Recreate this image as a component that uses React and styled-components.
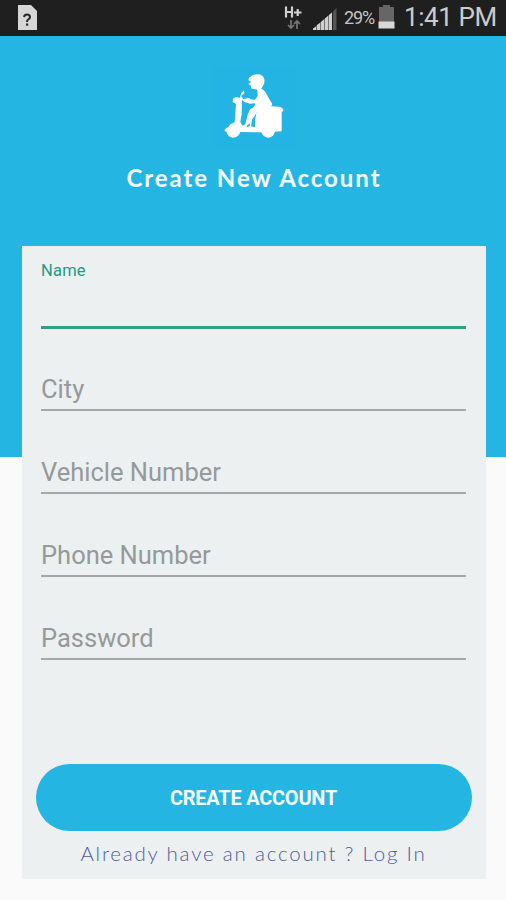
import React from "react";
import styled, { createGlobalStyle } from "styled-components";

const GlobalStyle = createGlobalStyle`
  * { box-sizing: border-box; }
  body { margin: 0; background: #fafafa; font-family: Roboto, sans-serif; }
`;

const Screen = styled.main`
  width: 506px;
  height: 900px;
  overflow: hidden;
  background: #fafafa;
`;

const StatusBar = styled.div`
  display: flex;
  justify-content: space-between;
  height: 36px;
  padding: 0 10px 0 18px;
  background: #1f1f1f;
  color: #cfcfcf;
`;

const StatusGroup = styled.div`
  display: flex;
  align-items: flex-start;
`;

const StatusIcon = styled.svg`
  display: block;
  flex: none;
  width: ${(p) => p.$w}px;
  height: 36px;
  margin-right: ${(p) => p.$gap || 0}px;
`;

const Battery = styled.span`
  width: 34px;
  font-size: 18px;
  line-height: 36px;
  letter-spacing: -1.1px;
  white-space: nowrap;
  color: #c4c4c4;
`;

const Clock = styled.span`
  width: 92px;
  font-size: 26px;
  line-height: 35px;
  letter-spacing: -0.4px;
  white-space: nowrap;
  color: #cbcbcb;
`;

const Hero = styled.header`
  display: flex;
  flex-direction: column;
  align-items: center;
  height: 421px;
  padding-top: 24px;
  background: #25b5e3;
`;

const Logo = styled.svg`
  display: block;
  width: 110px;
  height: 90px;
  margin-left: 4px;
`;

const Title = styled.h1`
  margin: 12px 0 0;
  padding-left: 2px;
  font-family: Lato, sans-serif;
  font-size: 24px;
  font-weight: 700;
  line-height: 32px;
  letter-spacing: 1.95px;
  white-space: nowrap;
  color: #f4fdff;
`;

const Card = styled.form`
  display: flex;
  flex-direction: column;
  width: 464px;
  height: 633px;
  margin: -211px 0 0 22px;
  padding: 0 20px 0 19px;
  background: #ecf0f1;
`;

const Field = styled.label`
  display: flex;
  flex-direction: column;
  justify-content: ${(p) => (p.$active ? "space-between" : "flex-end")};
  height: 83px;
  margin-bottom: ${(p) => (p.$active ? -1 : 0)}px;
  padding-top: ${(p) => (p.$active ? 15 : 0)}px;
  border-bottom: ${(p) => (p.$active ? "3px solid #2f9f88" : "2px solid #a6a9aa")};
`;

const FieldLabel = styled.span`
  height: ${(p) => (p.$active ? 20 : 41)}px;
  font-size: ${(p) => (p.$active ? 16.5 : 25.5)}px;
  line-height: ${(p) => (p.$active ? 20 : 42)}px;
  letter-spacing: ${(p) => (p.$active ? 0.2 : 0)}px;
  color: ${(p) => (p.$active ? "#239b82" : "#969999")};
`;

const SubmitButton = styled.button`
  width: 436px;
  height: 67px;
  margin: 104px 0 0 -5px;
  padding: 0 1px 0 0;
  border: 0;
  border-radius: 34px;
  background: #25b5e3;
  font-family: Roboto, sans-serif;
  font-size: 20px;
  font-weight: 700;
  letter-spacing: -0.25px;
  color: #f4fdff;
`;

const LoginLink = styled.a`
  align-self: center;
  margin-top: 8px;
  font-family: Lato, sans-serif;
  font-size: 20.5px;
  font-weight: 300;
  line-height: 28px;
  letter-spacing: 1.79px;
  white-space: nowrap;
  color: #4f5c9c;
`;

const FIELDS = ["Name", "City", "Vehicle Number", "Phone Number", "Password"];

function ScooterLogo() {
  return (
    <Logo viewBox="0 0 330 270" fill="#fff" aria-label="Scooter rider">
      <path fill="#23b4e4" d="M40 18H284V264H40Z" />
      <path d="M147 53 Q160 41 174 43 Q188 44 192 55 Q196 68 189 77 L184 86 Q196 91 203 109 L217 132 L214 139 L238 140 Q249 143 250 151 Q250 155 245 156 L245 214 L225 215 Q221 231 204 233 Q189 232 184 217 L121 216 Q117 232 98 233 Q82 230 80 216 L73 212 Q75 204 85 201 L91 193 L104 187 L108 132 L98 126 L99 116 L107 111 L120 113 L124 98 L132 91 L133 100 L124 108 L129 117 L148 114 L151 118 L165 119 L173 108 L172 89 L155 86 L151 75 L145 73 L153 65 L145 61Z" />
      <path fill="#23b4e4" d="M126 120L135 127 150 131 166 130 164 137 157 145 151 146 143 164 136 193 127 197 121 185 125 163Z" />
      <path fill="#23b4e4" d="M171 151L168 161 156 179 153 199 165 202 165 179Z" />
      <path fill="#23b4e4" d="M142 195L150 190 149 199 140 202Z" />
    </Logo>
  );
}

export default function App() {
  return (
    <>
      <GlobalStyle />
      <Screen>
        <StatusBar>
          <StatusIcon $w={20} viewBox="0 0 20 36">
            <path fill="#d6d6d6" d="M0 5H13L19 11V30H0Z" />
            <path fill="none" stroke="#292929" strokeWidth="2" d="M6 17Q6.500 14.500 9 14.500Q12 14.500 12 17Q12 18.500 10.200 19.500Q9 20.200 9 22" />
            <path fill="#292929" d="M8 23.500H10.200V25.700H8Z" />
          </StatusIcon>
          <StatusGroup>
            <StatusIcon $w={20} $gap={9} viewBox="0 0 20 36">
              <g fill="none" stroke="#d0d0d0" strokeWidth="2.200">
                <path d="M3 6.500V17.500M9 6.500V17.500M3 12H9M11 12.500H18.500M14.700 9V16" />
              </g>
              <path fill="none" stroke="#777" strokeWidth="1.700" d="M8 20V28M5 25L8 28L11 25M14 29V21M11 24L14 21L17 24" />
            </StatusIcon>
            <StatusIcon $w={26} $gap={6} viewBox="0 0 26 36">
              <path fill="#777" d="M1 30V28.500L20 12.500V30Z" />
              <path fill="#d0d0d0" d="M1 30V28.500L4 27V30ZM5 30V25L8 23V30ZM9 30V22L12 19.500V30ZM13 30V18.500L16 16V30ZM17 30V15L20 12.500V30Z" />
              <path fill="#555" d="M21 30V11.500L24.500 8V30Z" />
            </StatusIcon>
            <Battery>29%</Battery>
            <StatusIcon $w={17} $gap={9} viewBox="0 0 17 36">
              <path fill="#666" d="M1 7H5V5H12V7H16V22H1Z" />
              <path fill="#d8d8d8" d="M0.500 21.500H16.500V28.500H0.500Z" />
            </StatusIcon>
            <Clock>1:41 PM</Clock>
          </StatusGroup>
        </StatusBar>
        <Hero>
          <ScooterLogo />
          <Title>Create New Account</Title>
        </Hero>
        <Card>
          {FIELDS.map((name, i) => (
            <Field key={name} $active={i === 0}>
              <FieldLabel $active={i === 0}>{name}</FieldLabel>
            </Field>
          ))}
          <SubmitButton type="button">CREATE ACCOUNT</SubmitButton>
          <LoginLink>Already have an account ? Log In</LoginLink>
        </Card>
      </Screen>
    </>
  );
}
